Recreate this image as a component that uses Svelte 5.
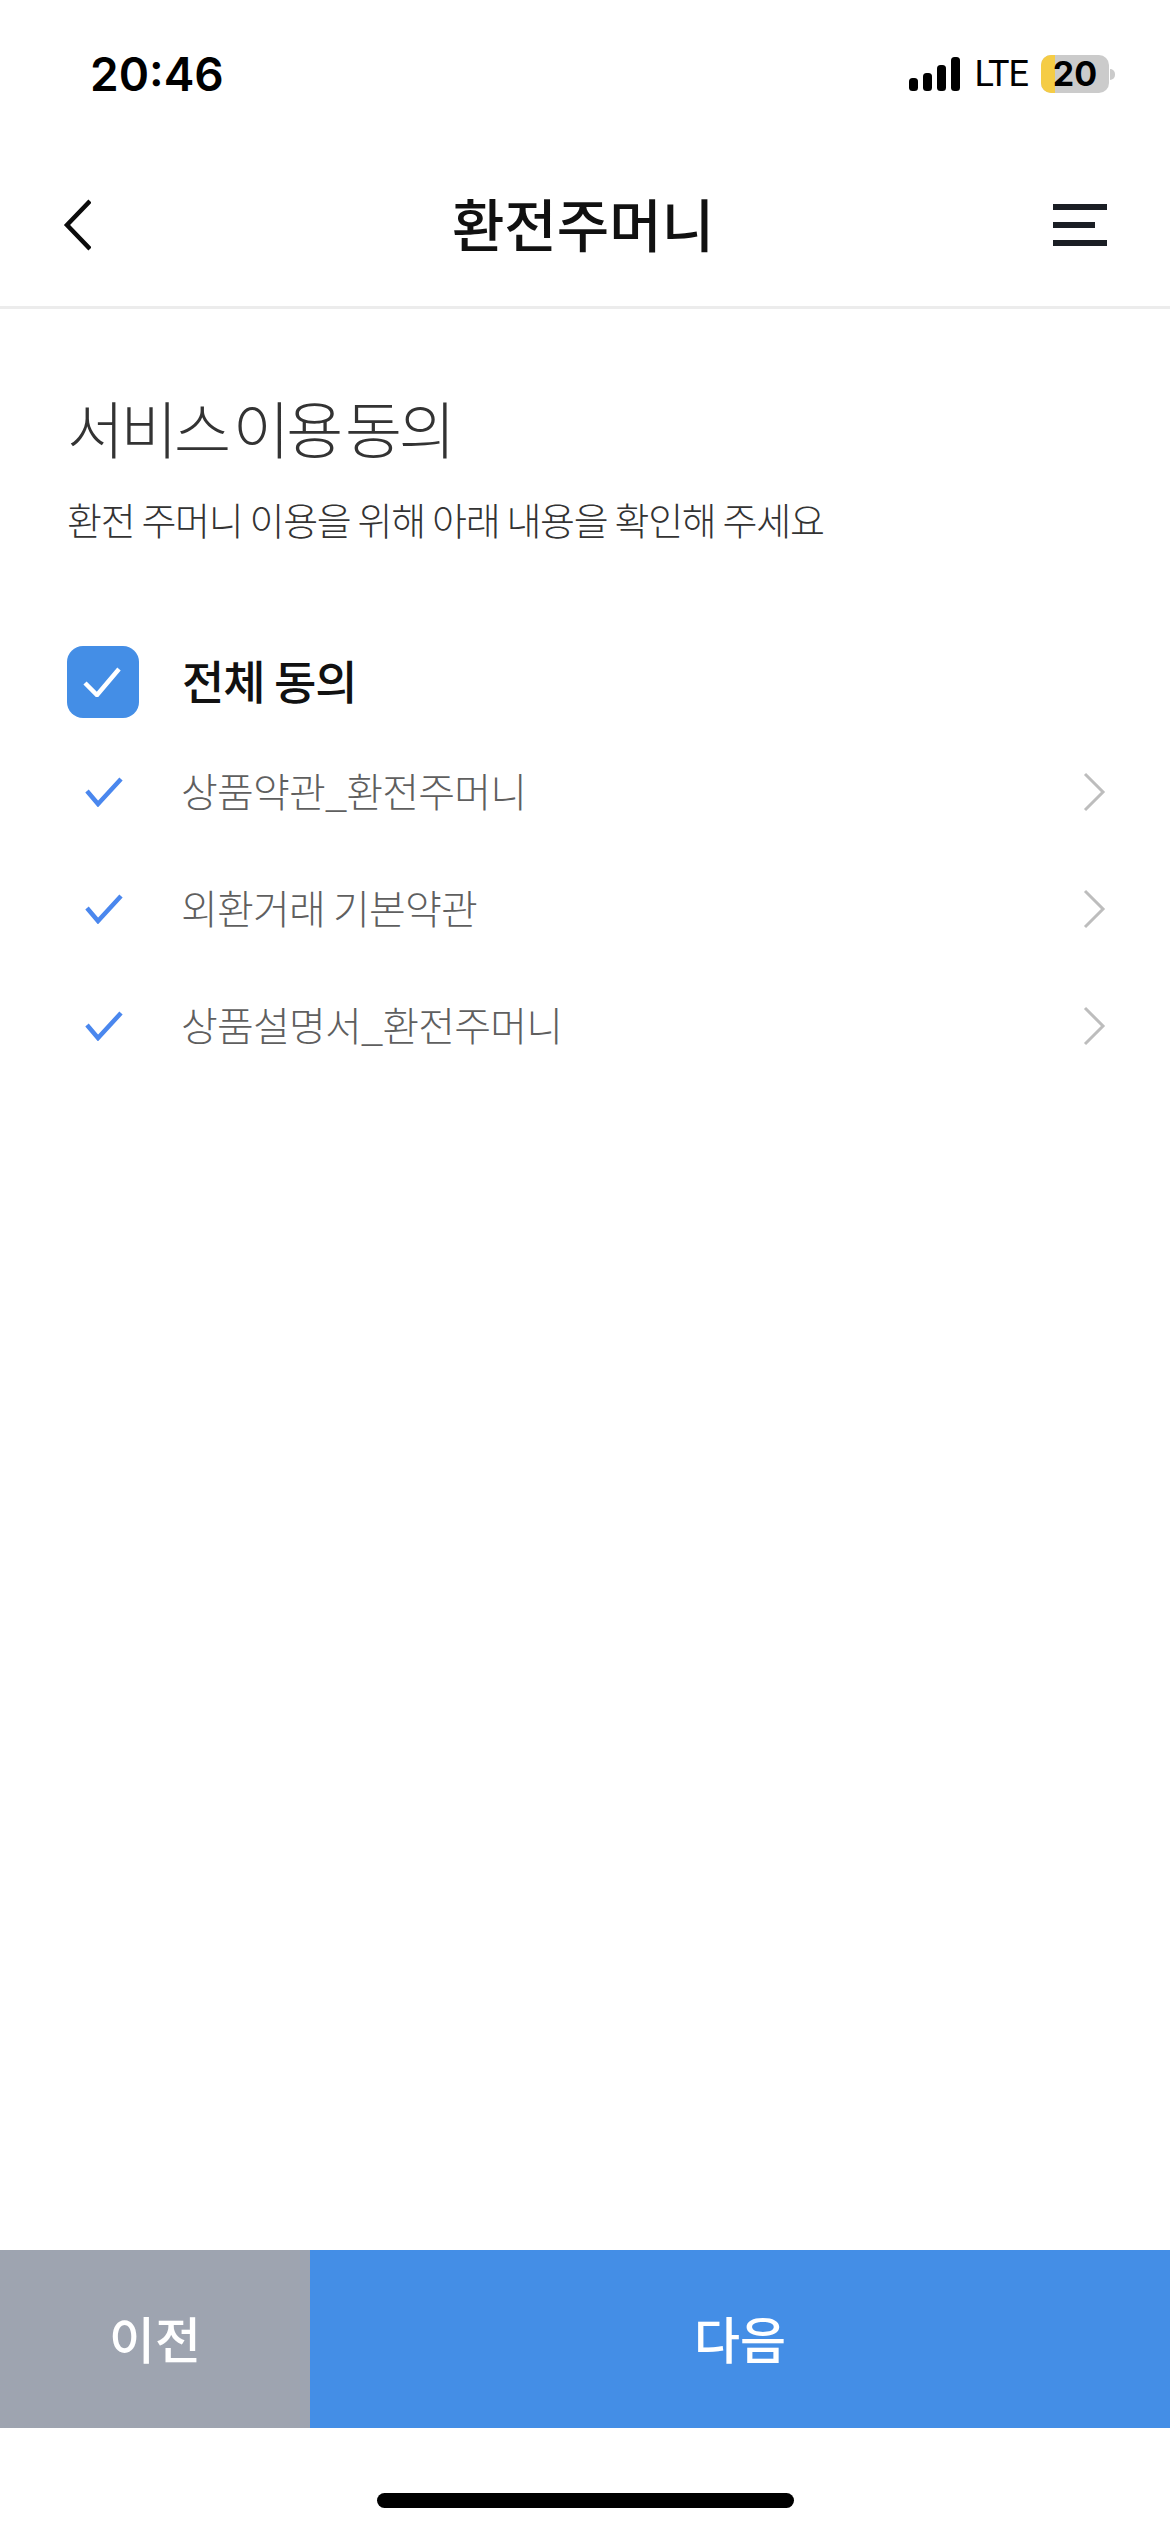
<script>
  const terms = ['상품약관_환전주머니', '외환거래 기본약관', '상품설명서_환전주머니'];
</script>

<div class="screen">
  <div class="status">
    <span class="time">20:46</span>
    <div class="indicators">
      <svg class="signal" width="51" height="34" viewBox="0 0 51 34">
        <rect x="0" y="21" width="9" height="13" rx="3.5" />
        <rect x="14" y="16" width="9" height="18" rx="3.5" />
        <rect x="28" y="8" width="9" height="26" rx="3.5" />
        <rect x="42" y="0" width="9" height="34" rx="3.5" />
      </svg>
      <span class="lte">LTE</span>
      <div class="battery">
        <div class="level"><span class="fill"></span><span class="pct">20</span></div>
        <span class="nub"></span>
      </div>
    </div>
  </div>

  <header class="topbar">
    <button class="back" aria-label="뒤로">
      <svg width="28" height="52" viewBox="0 0 28 52" fill="none">
        <path d="M27 2 4 26l23 24" stroke="#0b0b0b" stroke-width="4.5" />
      </svg>
    </button>
    <h1>환전주머니</h1>
    <button class="menu" aria-label="메뉴">
      <span></span>
      <span class="short"></span>
      <span></span>
    </button>
  </header>

  <main>
    <h2>서비스 이용 동의</h2>
    <p class="lead">환전 주머니 이용을 위해 아래 내용을 확인해 주세요</p>

    <div class="all">
      <span class="box">
        <svg width="38" height="30" viewBox="0 0 38 30" fill="none">
          <path d="M2 16l12 12L36 2" stroke="#fff" stroke-width="4.5" />
        </svg>
      </span>
      <strong>전체 동의</strong>
    </div>

    <ul>
      {#each terms as term}
        <li>
          <svg class="tick" width="38" height="30" viewBox="0 0 38 30" fill="none">
            <path d="M2 14l11 13L36 2" stroke="#4a87ee" stroke-width="4.5" />
          </svg>
          <span class="label">{term}</span>
          <svg class="chev" width="24" height="40" viewBox="0 0 24 40" fill="none">
            <path d="M3 2l18 18L3 38" stroke="#bdbdbd" stroke-width="3" />
          </svg>
        </li>
      {/each}
    </ul>
  </main>

  <footer>
    <div class="actions">
      <button class="prev">이전</button>
      <button class="next">다음</button>
    </div>
    <div class="home-row"><span class="home"></span></div>
  </footer>
</div>

<style>
  :global(body) {
    margin: 0;
    background: #fff;
  }

  .screen {
    width: 1170px;
    height: 2532px;
    display: flex;
    flex-direction: column;
    font-family: "Noto Sans CJK KR", "Noto Sans", sans-serif;
    color: #111;
    overflow: hidden;
  }

  .status {
    height: 100px;
    padding: 51px 55px 0 90px;
    box-sizing: border-box;
    display: flex;
    justify-content: space-between;
    align-items: flex-start;
  }

  .time {
    font-family: Inter, sans-serif;
    font-size: 46px;
    font-weight: 600;
    line-height: 46px;
    color: #000;
  }

  .indicators {
    display: flex;
    align-items: center;
    margin-top: 4px;
    height: 38px;
  }

  .signal {
    fill: #000;
    margin-right: 15px;
  }

  .lte {
    font-family: Roboto, sans-serif;
    font-size: 36px;
    line-height: 38px;
    letter-spacing: -1px;
    color: #000;
    margin-right: 13px;
  }

  .battery {
    display: flex;
    align-items: center;
  }

  .level {
    position: relative;
    width: 68px;
    height: 38px;
    border-radius: 10px;
    background: #cbcbcb;
    text-align: center;
  }

  .fill {
    position: absolute;
    left: 0;
    top: 0;
    bottom: 0;
    width: 14px;
    border-radius: 10px 0 0 10px;
    background: #f5cc45;
  }

  .pct {
    position: relative;
    font-family: Inter, sans-serif;
    font-size: 34px;
    font-weight: 700;
    line-height: 38px;
    color: #000;
    display: block;
  }

  .nub {
    width: 5px;
    height: 11px;
    margin-left: 1px;
    border-radius: 0 6px 6px 0;
    background: #cbcbcb;
  }

  .topbar {
    height: 209px;
    box-sizing: border-box;
    border-bottom: 3px solid #ececec;
    display: flex;
    align-items: center;
    justify-content: space-between;
    padding: 44px 63px 0;
  }

  button {
    border: 0;
    background: none;
    padding: 0;
    font: inherit;
  }

  .back {
    width: 54px;
    display: flex;
  }

  h1 {
    margin: 0 4px 6px 0;
    font-size: 57px;
    font-weight: 500;
    line-height: 60px;
    color: #111;
  }

  .menu {
    width: 54px;
    display: flex;
    flex-direction: column;
    gap: 12px;
  }

  .menu span {
    display: block;
    height: 6px;
    background: #1a1e24;
  }

  .menu .short {
    width: 42px;
  }

  main {
    flex: 1;
    padding: 77px 40px 0 67px;
  }

  h2 {
    margin: 0;
    font-size: 62px;
    font-weight: 300;
    line-height: 82px;
    letter-spacing: -3.5px;
    word-spacing: -5px;
    color: #333;
  }

  .lead {
    margin: 25px 0 0;
    font-size: 38px;
    font-weight: 300;
    line-height: 52px;
    letter-spacing: -1.3px;
    color: #333;
  }

  .all {
    display: flex;
    align-items: center;
    margin-top: 101px;
    gap: 43px;
  }

  .box {
    width: 72px;
    height: 72px;
    padding-right: 3px;
    box-sizing: border-box;
    border-radius: 16px;
    background: #448ee6;
    display: flex;
    align-items: center;
    justify-content: center;
  }

  .all strong {
    font-size: 46px;
    font-weight: 500;
    line-height: 60px;
    letter-spacing: -1px;
    color: #111;
    margin-bottom: 6px;
  }

  ul {
    list-style: none;
    margin: 13px 0 0;
    padding: 0;
  }

  li {
    height: 117px;
    display: flex;
    align-items: center;
    padding-left: 18px;
  }

  .tick {
    margin: 4px 58px 0 0;
    flex: none;
  }

  .label {
    flex: 1;
    font-size: 40px;
    font-weight: 300;
    line-height: 56px;
    letter-spacing: -0.8px;
    color: #5f5f5f;
  }

  .chev {
    flex: none;
    margin: 4px 24px 0 0;
  }

  .actions {
    display: flex;
    height: 178px;
  }

  .actions button {
    color: #fff;
    font-size: 50px;
    font-weight: 500;
    padding-bottom: 4px;
  }

  .prev {
    width: 310px;
    background: #9ea4b0;
  }

  .next {
    flex: 1;
    background: #448ee6;
  }

  .home-row {
    height: 104px;
    display: flex;
    justify-content: center;
    padding-top: 65px;
    box-sizing: border-box;
  }

  .home {
    width: 417px;
    height: 15px;
    border-radius: 8px;
    background: #000;
  }
</style>
